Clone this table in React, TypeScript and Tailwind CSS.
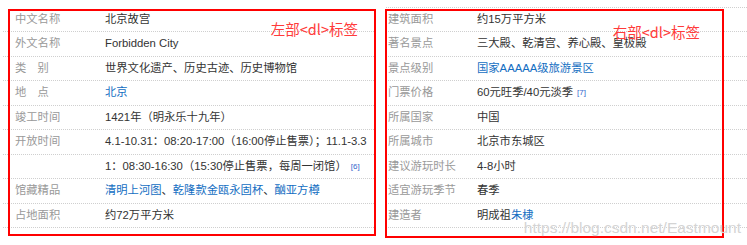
import React from 'react';

type Part = { text: string; link?: boolean; sup?: string };
type Row = { label: string; value: Part[] };

const leftRows: Row[] = [
  { label: '中文名称', value: [{ text: '北京故宫' }] },
  { label: '外文名称', value: [{ text: 'Forbidden City' }] },
  { label: '类　别', value: [{ text: '世界文化遗产、历史古迹、历史博物馆' }] },
  { label: '地　点', value: [{ text: '北京', link: true }] },
  { label: '竣工时间', value: [{ text: '1421年（明永乐十九年）' }] },
  { label: '开放时间', value: [{ text: '4.1-10.31：08:20-17:00（16:00停止售票）；11.1-3.3' }] },
  { label: '', value: [{ text: '1：08:30-16:30（15:30停止售票，每周一闭馆）', sup: '[6]' }] },
  {
    label: '馆藏精品',
    value: [
      { text: '清明上河图', link: true },
      { text: '、' },
      { text: '乾隆款金瓯永固杯', link: true },
      { text: '、' },
      { text: '酗亚方樽', link: true },
    ],
  },
  { label: '占地面积', value: [{ text: '约72万平方米' }] },
];

const rightRows: Row[] = [
  { label: '建筑面积', value: [{ text: '约15万平方米' }] },
  { label: '著名景点', value: [{ text: '三大殿、乾清宫、养心殿、皇极殿' }] },
  { label: '景点级别', value: [{ text: '国家AAAAA级旅游景区', link: true }] },
  { label: '门票价格', value: [{ text: '60元旺季/40元淡季', sup: '[7]' }] },
  { label: '所属国家', value: [{ text: '中国' }] },
  { label: '所属城市', value: [{ text: '北京市东城区' }] },
  { label: '建议游玩时长', value: [{ text: '4-8小时' }] },
  { label: '适宜游玩季节', value: [{ text: '春季' }] },
  { label: '建造者', value: [{ text: '明成祖' }, { text: '朱棣', link: true }] },
];

function InfoRow({ row, labelClass }: { row: Row; labelClass: string }) {
  return (
    <div className="flex border-b border-dotted border-[#cfcfcf] leading-[23.5px]">
      <dt className={`${labelClass} shrink-0 text-[#999]`}>{row.label}</dt>
      <dd className="whitespace-nowrap text-[#333]">
        {row.value.map((p, i) => (
          <React.Fragment key={i}>
            <span className={p.link ? 'text-[#136ec2]' : ''}>{p.text}</span>
            {p.sup && (
              <sup className="ml-[4px] text-[8px] text-[#3366cc] relative -top-[1px]">{p.sup}</sup>
            )}
          </React.Fragment>
        ))}
      </dd>
    </div>
  );
}

const noteFont = { fontFamily: '"Noto Sans CJK SC", sans-serif' };

export default function App() {
  return (
    <div
      className="relative w-[747px] h-[245px] overflow-hidden bg-white text-[11.3px]"
      style={{ fontFamily: '"Liberation Sans", "Noto Sans CJK SC", sans-serif' }}
    >
      <div className="flex pt-[7.5px]">
        {/* 左部 dl */}
        <div className="relative ml-[3px] w-[373px]">
          <dl>
            {leftRows.map((row, i) => (
              <InfoRow key={i} row={row} labelClass="w-[102px] pl-[12px]" />
            ))}
          </dl>
          {/* red annotation box */}
          <div className="absolute left-[5px] right-0 top-[1.5px] h-[227px] border-2 border-[#ff0000]">
            <span
              className="absolute right-[16px] top-[8px] text-[14.5px] leading-[20px] text-[#ff3b3b]"
              style={noteFont}
            >
              左部&lt;dl&gt;标签
            </span>
          </div>
        </div>

        {/* 右部 dl */}
        <div className="relative ml-[10px] flex-1">
          <dl className="border-t border-dotted border-[#cfcfcf] -mt-px">
            {rightRows.map((row, i) => (
              <InfoRow key={i} row={row} labelClass="w-[91px] pl-[2px]" />
            ))}
          </dl>
          <div className="absolute -left-[1px] right-[23px] top-[1.5px] h-[229px] border-2 border-[#ff0000]">
            <span
              className="absolute right-[22px] top-[11px] text-[14.5px] leading-[20px] text-[#ff3b3b]"
              style={noteFont}
            >
              右部&lt;dl&gt;标签
            </span>
          </div>
        </div>
      </div>

      {/* watermark */}
      <div className="absolute right-[6px] bottom-[7px] text-[15.5px] leading-[20px] text-[#d4d4d4] [text-shadow:0_0_1px_#fff]">
        https://blog.csdn.net/Eastmount
      </div>
    </div>
  );
}
